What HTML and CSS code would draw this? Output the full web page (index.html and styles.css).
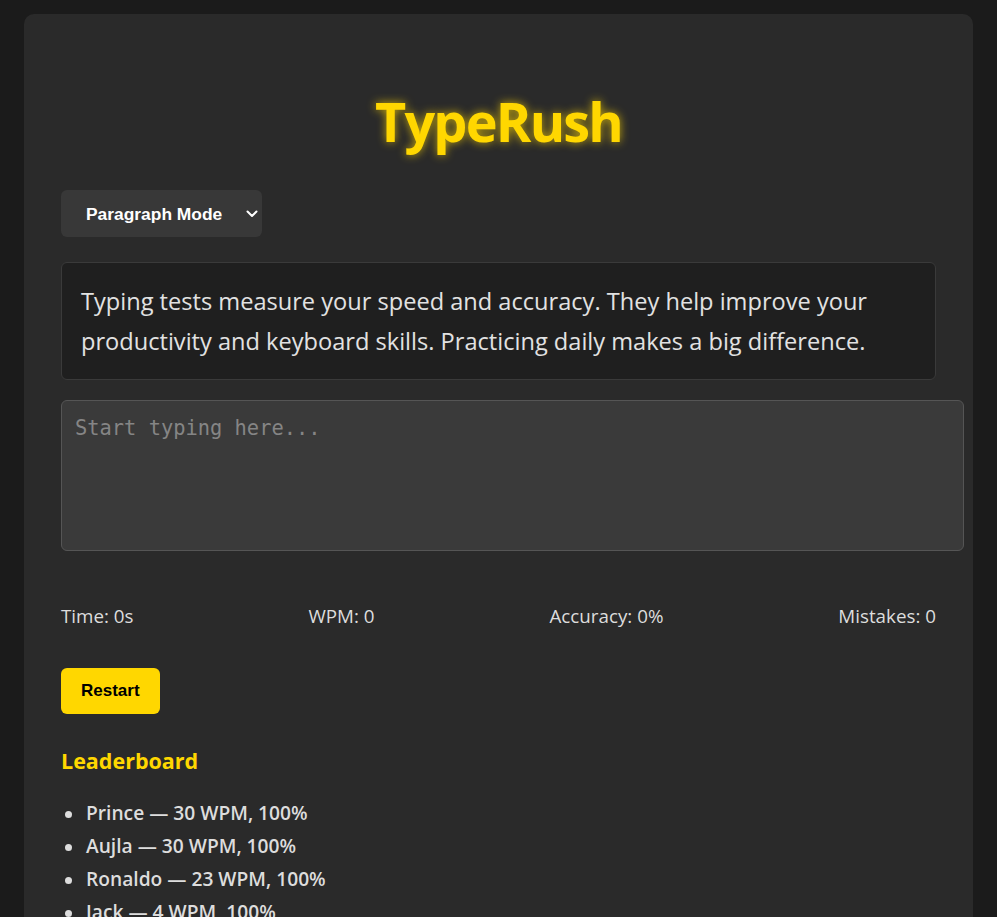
FILE: index.html
```html
<!DOCTYPE html>
<html lang="en">
<head>
<meta charset="UTF-8">
<title>TypeRush</title>
<link rel="stylesheet" href="styles.css">
</head>
<body>
<div class="container">
  <h1 class="title">TypeRush</h1>
  <div class="mode-wrap">
    <select class="mode-select">
      <option>Paragraph Mode</option>
      <option>Word Mode</option>
    </select>
    <svg class="chevron" width="12" height="8" viewBox="0 0 12 8" aria-hidden="true"><path d="M1.5 1.5 L6 6 L10.5 1.5" fill="none" stroke="#ffffff" stroke-width="2" stroke-linecap="round" stroke-linejoin="round"/></svg>
  </div>
  <div class="passage">Typing tests measure your speed and accuracy. They help improve your productivity and keyboard skills. Practicing daily makes a big difference.</div>
  <textarea class="input" placeholder="Start typing here..."></textarea>
  <div class="stats">
    <span>Time: 0s</span>
    <span>WPM: 0</span>
    <span>Accuracy: 0%</span>
    <span>Mistakes: 0</span>
  </div>
  <button class="restart">Restart</button>
  <h2 class="lb-title">Leaderboard</h2>
  <ul class="lb-list">
    <li>Prince — 30 WPM, 100%</li>
    <li>Aujla — 30 WPM, 100%</li>
    <li>Ronaldo — 23 WPM, 100%</li>
    <li>Jack — 4 WPM, 100%</li>
  </ul>
</div>
</body>
</html>
```
FILE: styles.css
```css
html, body {
  margin: 0;
  padding: 0;
  background: #1b1b1b;
}
body {
  font-family: "Open Sans", "Noto Sans", sans-serif;
  color: #e0e0e0;
  padding: 14px 24px 0;
}
.container {
  background: #2a2a2a;
  border-radius: 10px;
  padding: 1px 37px 40px;
  display: flex;
  flex-direction: column;
  align-items: flex-start;
}
.title {
  align-self: stretch;
  text-align: center;
  margin: 74px 0 0;
  font-size: 54px;
  line-height: 64px;
  letter-spacing: -1.8px;
  font-weight: 700;
  color: #ffd700;
  text-shadow: 0 0 10px rgba(255, 215, 0, 0.75);
}
.mode-wrap {
  position: relative;
  margin-top: 37px;
}
.mode-select {
  display: block;
  appearance: none;
  -webkit-appearance: none;
  width: 201px;
  height: 47px;
  padding: 0 20px 0 25px;
  border: none;
  border-radius: 6px;
  background: #383838;
  color: #ffffff;
  font-family: "Liberation Sans", Arial, sans-serif;
  font-weight: 700;
  font-size: 17.4px;
}
.chevron {
  position: absolute;
  right: 4px;
  top: 20px;
  pointer-events: none;
}
.passage {
  align-self: stretch;
  margin-top: 25px;
  background: #1f1f1f;
  border: 1px solid #3a3a3a;
  border-radius: 6px;
  padding: 18px 19px;
  font-size: 23.6px;
  line-height: 40px;
  color: #e2e2e2;
}
.input {
  display: block;
  width: 100%;
  height: 119px;
  margin-top: 20px;
  padding: 15px 13px;
  background: #3a3a3a;
  border: 1px solid #555555;
  border-radius: 6px;
  color: #eeeeee;
  font-family: "DejaVu Sans Mono", monospace;
  font-size: 20.4px;
  resize: none;
  outline: none;
}
.input::placeholder {
  color: #858585;
}
.stats {
  align-self: stretch;
  display: flex;
  justify-content: space-between;
  margin-top: 53px;
  font-size: 18.8px;
  line-height: 24px;
  color: #dddddd;
}
.restart {
  margin-top: 40px;
  padding: 13px 20px;
  border: none;
  border-radius: 6px;
  background: #ffd700;
  color: #000000;
  font-family: "Liberation Sans", Arial, sans-serif;
  font-weight: 700;
  font-size: 17px;
  line-height: 20px;
}
.lb-title {
  margin: 33px 0 0;
  font-size: 21.5px;
  line-height: 28px;
  font-weight: 700;
  color: #ffd700;
}
.lb-list {
  list-style: none;
  margin: 21px 0 0;
  padding: 0;
}
.lb-list li {
  font-size: 19.2px;
  line-height: 33px;
  font-weight: 600;
  color: #dddddd;
}
.lb-list li::before {
  content: "";
  display: inline-block;
  width: 7px;
  height: 7px;
  border-radius: 50%;
  background: #dddddd;
  margin: 0 14px 0 4px;
  vertical-align: middle;
}
```
